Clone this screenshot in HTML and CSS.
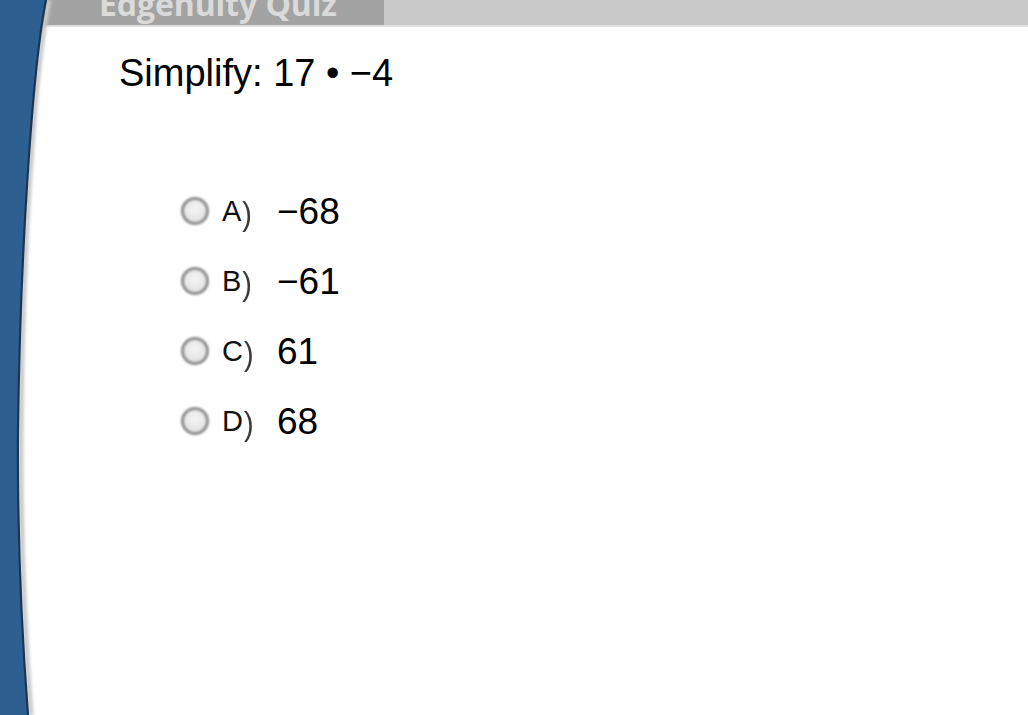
FILE: index.html
```html
<!DOCTYPE html>
<html lang="en">
<head>
<meta charset="utf-8">
<title>Edgenuity Quiz</title>
<link rel="stylesheet" href="styles.css">
</head>
<body>
<div class="page">
  <header class="topbar">
    <div class="brand"><span class="brand-text">Edgenuity Quiz</span></div>
    <div class="topbar-fill"></div>
  </header>
  <main class="quiz">
    <p class="question">Simplify: 17 • −4</p>
    <ul class="options">
      <li class="option"><span class="radio"></span><span class="label">A<span class="paren">)</span></span><span class="answer">−68</span></li>
      <li class="option"><span class="radio"></span><span class="label">B<span class="paren">)</span></span><span class="answer">−61</span></li>
      <li class="option"><span class="radio"></span><span class="label">C<span class="paren">)</span></span><span class="answer">61</span></li>
      <li class="option"><span class="radio"></span><span class="label">D<span class="paren">)</span></span><span class="answer">68</span></li>
    </ul>
  </main>
  <svg class="swoosh" width="60" height="715" viewBox="0 0 60 715" aria-hidden="true">
    <defs>
      <filter id="soft" x="-50%" y="-5%" width="200%" height="110%">
        <feGaussianBlur stdDeviation="1.6"/>
      </filter>
      <filter id="soft2" x="-50%" y="-5%" width="200%" height="110%">
        <feGaussianBlur stdDeviation="0.6"/>
      </filter>
    </defs>
    <path d="M47,0 C32,70 20,260 19,430 C18,560 24,650 29,715" fill="none" stroke="#c9c9c9" stroke-width="5" filter="url(#soft)" transform="translate(2,0)"/>
    <path d="M0,0 L46,0 C32,70 20,260 18,430 C17,560 23,650 28,715 L0,715 Z" fill="#2d5f91"/>
    <path d="M46,0 C32,70 20,260 18,430 C17,560 23,650 28,715" fill="none" stroke="#1a3553" stroke-width="2.2" filter="url(#soft2)"/>
  </svg>
</div>
</body>
</html>
```
FILE: styles.css
```css
html, body {
  margin: 0;
  padding: 0;
  background: #ffffff;
}

.page {
  position: relative;
  width: 1028px;
  height: 715px;
  overflow: hidden;
  font-family: "Liberation Sans", Arial, sans-serif;
  color: #000000;
}

.topbar {
  display: flex;
  height: 25px;
  border-bottom: 2px solid #dedede;
  overflow: hidden;
}

.brand {
  width: 384px;
  flex: 0 0 384px;
  background: #a3a3a3;
  padding-left: 99px;
  box-sizing: border-box;
  overflow: hidden;
}

.brand-text {
  display: block;
  margin-top: -9px;
  font-family: "Open Sans", "Liberation Sans", sans-serif;
  font-weight: 700;
  font-size: 32px;
  line-height: 25px;
  color: #dadada;
  white-space: nowrap;
  letter-spacing: -0.1px;
}

.topbar-fill {
  flex: 1 1 auto;
  background: #c8c8c8;
}

.quiz {
  padding-left: 119px;
}

.question {
  margin: 25px 0 0 0;
  font-size: 38px;
  line-height: 43px;
}

.options {
  list-style: none;
  margin: 81px 0 0 62px;
  padding: 0;
}

.option {
  display: flex;
  align-items: center;
  height: 70px;
}

.radio {
  width: 22px;
  height: 22px;
  flex: 0 0 22px;
  border: 3px solid #8f8f8f;
  border-radius: 50%;
  background: radial-gradient(circle at 50% 40%, #f4f4f4, #dddddd);
  filter: blur(0.8px);
}

.label {
  width: 55px;
  flex: 0 0 55px;
  margin-left: 13px;
  font-size: 29px;
  line-height: 43px;
  color: #111111;
}

.paren {
  display: inline-block;
  color: #3a3a3a;
  transform: translate(1px, 3px) scaleY(1.12);
  filter: blur(0.6px);
}

.answer {
  font-size: 37px;
  line-height: 43px;
}

.swoosh {
  position: absolute;
  left: 0;
  top: 0;
}
```
